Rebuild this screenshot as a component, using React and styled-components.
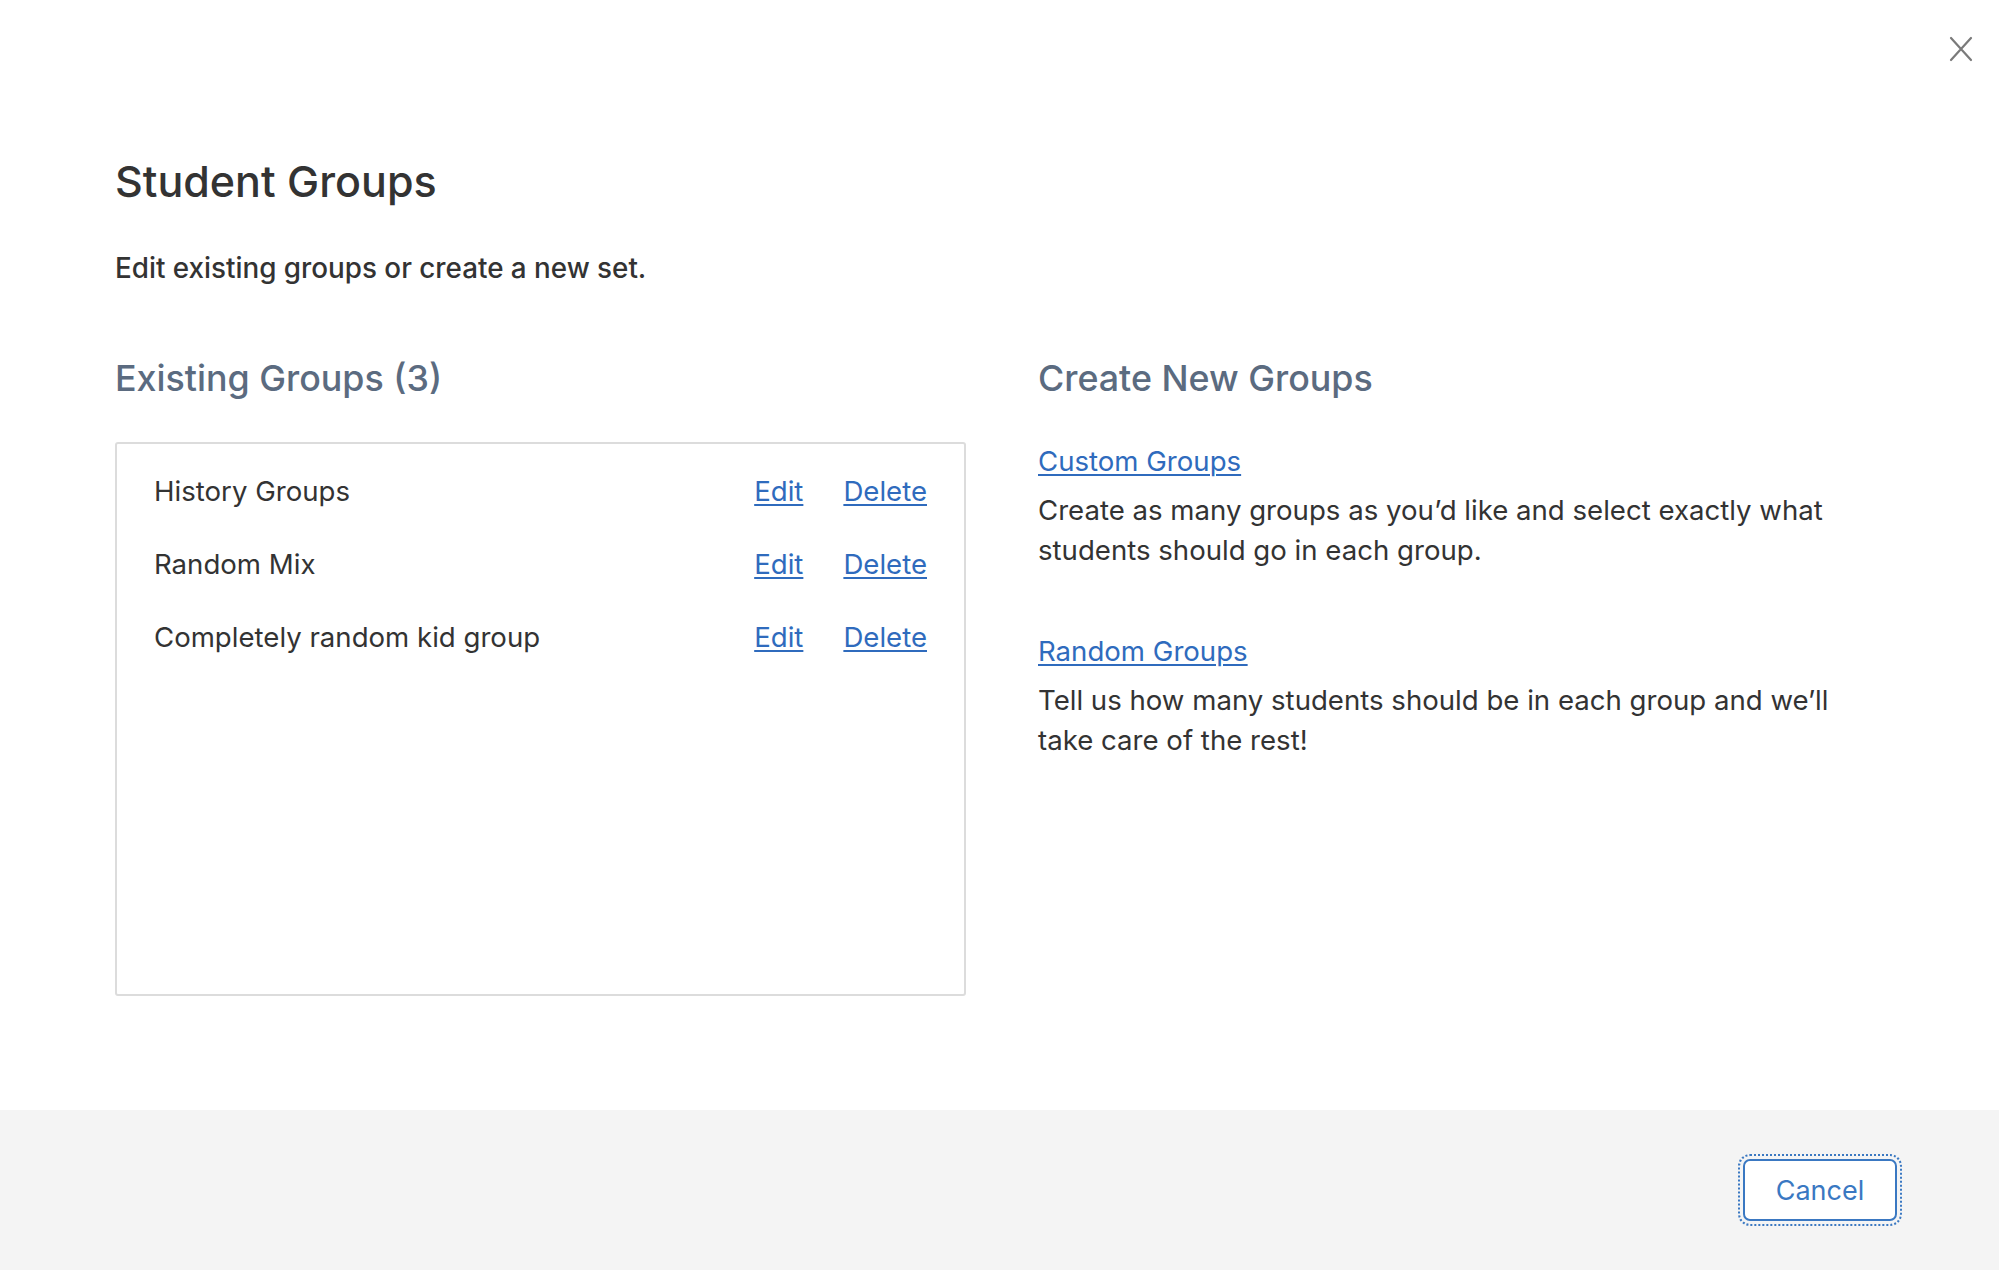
import React from 'react';
import styled, { createGlobalStyle } from 'styled-components';

const GlobalStyle = createGlobalStyle`
  html, body {
    margin: 0;
    padding: 0;
    background: #ffffff;
  }
  body {
    font-family: Inter, "Noto Sans", "Liberation Sans", sans-serif;
    color: #333333;
  }
`;

const groups = [
  { id: 1, name: 'History Groups' },
  { id: 2, name: 'Random Mix' },
  { id: 3, name: 'Completely random kid group' },
];

const options = [
  {
    id: 'custom',
    title: 'Custom Groups',
    text: 'Create as many groups as you’d like and select exactly what students should go in each group.',
  },
  {
    id: 'random',
    title: 'Random Groups',
    text: 'Tell us how many students should be in each group and we’ll take care of the rest!',
  },
];

const App = () => {
  return (
    <Modal>
      <GlobalStyle />
      <CloseButton aria-label='Close'>
        <svg width='24' height='26' viewBox='0 0 24 26' fill='none'>
          <path d='M2 2 L22 24 M22 2 L2 24' stroke='#7a7a7a' strokeWidth='2.2' strokeLinecap='round' />
        </svg>
      </CloseButton>
      <Body>
        <Title>Student Groups</Title>
        <Subtitle>Edit existing groups or create a new set.</Subtitle>
        <Columns>
          <Column>
            <SectionHeading>Existing Groups ({groups.length})</SectionHeading>
            <GroupList>
              {groups.map((group) => (
                <GroupRow key={group.id}>
                  <GroupName>{group.name}</GroupName>
                  <Actions>
                    <LinkButton href='#'>Edit</LinkButton>
                    <LinkButton href='#'>Delete</LinkButton>
                  </Actions>
                </GroupRow>
              ))}
            </GroupList>
          </Column>
          <Column>
            <SectionHeading>Create New Groups</SectionHeading>
            <OptionList>
              {options.map((option) => (
                <Option key={option.id}>
                  <LinkButton href='#'>{option.title}</LinkButton>
                  <OptionText>{option.text}</OptionText>
                </Option>
              ))}
            </OptionList>
          </Column>
        </Columns>
      </Body>
      <Footer>
        <CancelButton>Cancel</CancelButton>
      </Footer>
    </Modal>
  );
};

export default App;

const Modal = styled.div`
  position: relative;
  display: flex;
  flex-direction: column;
  width: 1999px;
  height: 1270px;
  background: #ffffff;
`

const CloseButton = styled.button`
  position: absolute;
  top: 36px;
  right: 26px;
  padding: 0;
  border: none;
  background: none;
  cursor: pointer;
  line-height: 0;
`

const Body = styled.div`
  flex: 1;
  padding: 155px 115px 0;
`

const Title = styled.h1`
  margin: 0;
  font-size: 43px;
  line-height: 52px;
  font-weight: 500;
  color: #333333;
`

const Subtitle = styled.p`
  margin: 42px 0 0;
  font-size: 27.8px;
  line-height: 38px;
  font-weight: 500;
  color: #333333;
`

const Columns = styled.div`
  display: grid;
  grid-template-columns: 851px 846px;
  column-gap: 72px;
  margin-top: 68px;
`

const Column = styled.div`
  display: flex;
  flex-direction: column;
`

const SectionHeading = styled.h2`
  margin: 0;
  font-size: 35.8px;
  line-height: 46px;
  font-weight: 500;
  color: #5b6b80;
`

const GroupList = styled.div`
  height: 554px;
  box-sizing: border-box;
  margin-top: 41px;
  padding: 10px 37px 0 37px;
  border: 2px solid #dcdcdc;
  border-radius: 3px;
`

const GroupRow = styled.div`
  display: flex;
  align-items: center;
  justify-content: space-between;
  height: 73px;
`

const GroupName = styled.span`
  font-size: 27.6px;
  color: #333333;
`

const Actions = styled.div`
  display: flex;
  gap: 40px;
`

const LinkButton = styled.a`
  font-size: 27.6px;
  color: #2f6bbd;
  text-decoration: underline;
  text-underline-offset: 3px;
  text-decoration-thickness: 2px;
`

const OptionList = styled.div`
  display: flex;
  flex-direction: column;
  gap: 64px;
  margin-top: 43px;
`

const Option = styled.div`
  display: flex;
  flex-direction: column;
  gap: 12px;
  max-width: 830px;
`

const OptionText = styled.p`
  margin: 0;
  font-size: 27.6px;
  line-height: 40px;
  color: #333333;
`

const Footer = styled.div`
  display: flex;
  align-items: center;
  justify-content: flex-end;
  height: 160px;
  padding-right: 102px;
  background: #f4f4f4;
`

const CancelButton = styled.button`
  width: 154px;
  height: 62px;
  border: 2px solid #3a78c2;
  border-radius: 7px;
  background: #ffffff;
  color: #3a78c2;
  font-family: Inter, "Noto Sans", "Liberation Sans", sans-serif;
  font-size: 27px;
  outline: 2px dotted #3a78c2;
  outline-offset: 3px;
  cursor: pointer;
`
